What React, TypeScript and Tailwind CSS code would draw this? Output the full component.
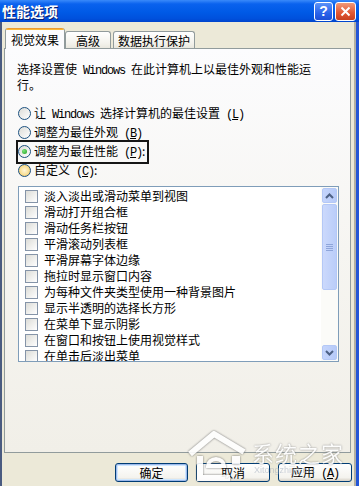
import React from "react";

const items = [
  "淡入淡出或滑动菜单到视图",
  "滑动打开组合框",
  "滑动任务栏按钮",
  "平滑滚动列表框",
  "平滑屏幕字体边缘",
  "拖拉时显示窗口内容",
  "为每种文件夹类型使用一种背景图片",
  "显示半透明的选择长方形",
  "在菜单下显示阴影",
  "在窗口和按钮上使用视觉样式",
  "在单击后淡出菜单",
];

function Latin({ children }: { children: React.ReactNode }) {
  return (
    <span className="font-['Liberation_Mono',monospace] tracking-[-1.2px] whitespace-pre">
      {children}
    </span>
  );
}

function Key({ k }: { k: string }) {
  return (
    <Latin>
      {" "}(<span className="underline">{k}</span>)
    </Latin>
  );
}

function Radio({ kind }: { kind?: "on" | "hover" }) {
  return (
    <span
      className={
        "w-[13px] h-[13px] rounded-full border border-[#1C5180] flex items-center justify-center shrink-0 " +
        (kind === "hover"
          ? "bg-[radial-gradient(circle,#FFF6D8_0%,#F9DF96_55%,#E9B74C_100%)]"
          : "bg-[linear-gradient(135deg,#DCDCD7,#FFFFFF)]")
      }
    >
      {kind === "on" && (
        <span className="w-[5px] h-[5px] rounded-full bg-[radial-gradient(circle_at_35%_35%,#7BE37B,#21A121)]" />
      )}
    </span>
  );
}

function Chevron({ up }: { up?: boolean }) {
  return (
    <svg width="9" height="6" viewBox="0 0 9 6">
      <path
        d={up ? "M1 5 L4.5 1.5 L8 5" : "M1 1 L4.5 4.5 L8 1"}
        fill="none"
        stroke="#4D6185"
        strokeWidth="2"
      />
    </svg>
  );
}

function Btn({ label, def }: { label: React.ReactNode; def?: boolean }) {
  return (
    <div
      className={
        "h-[19px] rounded-[3px] border border-[#003C74] flex items-center justify-center bg-[linear-gradient(#FFFFFF,#F4F3EE_80%,#D6D0C5)] " +
        (def ? "shadow-[inset_0_0_0_1px_#9DB9EB,inset_0_0_0_2px_#CEE7FF]" : "")
      }
    >
      {label}
    </div>
  );
}

export default function App() {
  return (
    <div className="relative w-[359px] h-[486px] overflow-hidden flex flex-col bg-[#ECE9D8] text-[12px] text-black font-['Noto_Sans_CJK_SC','Noto_Sans',sans-serif]">
      {/* title bar */}
      <div className="h-[22px] shrink-0 flex items-center pl-[2px] pr-[3px] bg-[linear-gradient(#3A8AFA_0%,#0A62EE_18%,#005AE6_55%,#0050DC_85%,#0044CC_100%)]">
        <span className="text-white font-bold text-[14px] leading-none [text-shadow:1px_1px_0_#0A1E6E]">
          性能选项
        </span>
        <div className="ml-auto flex gap-[2px]">
          <div className="w-[19px] h-[19px] rounded-[3px] border border-white flex items-center justify-center bg-[linear-gradient(#5C93F8,#2A63EA_60%,#1E4FD6)] text-white font-bold text-[14px] leading-none font-['Liberation_Sans',sans-serif]">
            ?
          </div>
          <div className="w-[21px] h-[19px] rounded-[3px] border border-white flex items-center justify-center bg-[linear-gradient(#F09A7B,#E35A36_55%,#C8401F)]">
            <svg width="11" height="11" viewBox="0 0 11 11">
              <path d="M1.5 1.5 L9.5 9.5 M9.5 1.5 L1.5 9.5" stroke="#fff" strokeWidth="2" />
            </svg>
          </div>
        </div>
      </div>

      <div className="flex-1 flex min-h-0">
        <div className="w-[2px] bg-[#4A5B80]" />
        <div className="flex-1 flex flex-col pt-[6px]">
          {/* tabs */}
          <div className="flex items-end h-[20px] ml-[3px]">
            <div className="relative z-10 w-[60px] h-[21px] -mb-px border-x border-[#919B9C] bg-[#FCFCFE] rounded-t-[3px] flex flex-col">
              <div className="h-[3px] rounded-t-[3px] bg-[linear-gradient(#E68B2C,#FFC83C)]" />
              <div className="flex-1 flex items-center justify-center pt-[1px]">视觉效果</div>
            </div>
            <div className="w-[46px] h-[17px] border-t border-x border-[#919B9C] rounded-t-[3px] bg-[linear-gradient(#FFFFFF,#F3F2EC_70%,#E9E7DE)] flex items-center justify-center pt-[2px]">
              高级
            </div>
            <div className="ml-[2px] w-[82px] h-[17px] border-t border-x border-[#919B9C] rounded-t-[3px] bg-[linear-gradient(#FFFFFF,#F3F2EC_70%,#E9E7DE)] flex items-center justify-center pt-[2px]">
              数据执行保护
            </div>
          </div>

          {/* panel */}
          <div className="ml-[2px] w-[347px] h-[405px] border border-[#919B9C] bg-[linear-gradient(#FCFCFE,#F6F5F1_50%,#F1EFE8)] flex flex-col pt-[13px]">
            <p className="pl-[12px] leading-[13px]">
              选择设置使<Latin> Windows </Latin>在此计算机上以最佳外观和性能运
              <br />
              行。
            </p>

            <div className="mt-[13px] flex flex-col">
              <div className="h-[19px] flex items-center pl-[13px] gap-[3px]">
                <Radio />
                <span>
                  让<Latin> Windows </Latin>选择计算机的最佳设置<Key k="L" />
                </span>
              </div>
              <div className="h-[19px] flex items-center pl-[13px] gap-[3px]">
                <Radio />
                <span>
                  调整为最佳外观<Key k="B" />
                </span>
              </div>
              <div className="h-[19px] flex items-center pl-[13px]">
                <span className="flex items-center gap-[3px] outline-2 outline-[#161616] outline-offset-0 pr-[2px]">
                  <Radio kind="on" />
                  <span>
                    调整为最佳性能<Key k="P" />:
                  </span>
                </span>
              </div>
              <div className="h-[19px] flex items-center pl-[13px] gap-[3px]">
                <Radio kind="hover" />
                <span>
                  自定义<Key k="C" />:
                </span>
              </div>
            </div>

            {/* list box */}
            <div className="mt-[6px] ml-[13px] w-[321px] h-[176px] border border-[#7F9DB9] bg-white flex overflow-hidden">
              <div className="flex-1 flex flex-col pt-[1px] overflow-hidden">
                {items.map((t) => (
                  <div key={t} className="h-[16px] shrink-0 flex items-center pl-[6px] gap-[6px]">
                    <span className="w-[13px] h-[13px] border border-[#8594A8] bg-[linear-gradient(135deg,#DCDCD7,#FFFFFF)] shrink-0" />
                    <span className="leading-none whitespace-nowrap">{t}</span>
                  </div>
                ))}
              </div>
              <div className="w-[17px] flex flex-col p-[1px] bg-[#FBFBF8]">
                <div className="h-[15px] rounded-[2px] border border-[#B4C8F6] bg-[linear-gradient(90deg,#C5D5FC,#B6CAF8)] flex items-center justify-center">
                  <Chevron up />
                </div>
                <div className="mt-[1px] h-[86px] rounded-[2px] border border-[#B4C8F6] bg-[linear-gradient(90deg,#CBD9FC,#BACDF9)] flex flex-col items-center justify-center gap-[1px]">
                  <span className="w-[7px] h-[1px] bg-[#8EA5DA]" />
                  <span className="w-[7px] h-[1px] bg-[#8EA5DA]" />
                  <span className="w-[7px] h-[1px] bg-[#8EA5DA]" />
                  <span className="w-[7px] h-[1px] bg-[#8EA5DA]" />
                </div>
                <div className="flex-1" />
                <div className="h-[15px] rounded-[2px] border border-[#B4C8F6] bg-[linear-gradient(90deg,#C5D5FC,#B6CAF8)] flex items-center justify-center">
                  <Chevron />
                </div>
              </div>
            </div>
          </div>

          {/* buttons */}
          <div className="mt-[10px] flex justify-end gap-[8px] pr-[2px]">
            <div className="w-[73px]">
              <Btn label="确定" def />
            </div>
            <div className="w-[74px]">
              <Btn label="取消" />
            </div>
            <div className="w-[74px]">
              <Btn
                label={
                  <span>
                    应用<Key k="A" />
                  </span>
                }
              />
            </div>
          </div>
        </div>
        <div className="w-[2px] bg-[#B3B0A2]" />
        <div className="w-[3px] bg-[#2456D6]" />
      </div>

      {/* watermark */}
      <div className="absolute left-[186px] top-[428px] w-[64px] h-[54px] opacity-90 [filter:drop-shadow(0_0_1px_#666)]">
        <svg width="64" height="54" viewBox="0 0 64 54">
          <path d="M4 26 L28 6 L58 24" fill="none" stroke="#fff" strokeWidth="6" strokeLinejoin="round" />
          <path d="M14 28 L14 50 L44 50" fill="none" stroke="#fff" strokeWidth="6" />
          <path d="M22 38 A8 7 0 1 1 38 38 L22 38 Z" fill="none" stroke="#fff" strokeWidth="4" />
          <rect x="46" y="28" width="8" height="8" fill="#fff" />
        </svg>
      </div>
      <div className="absolute left-[252px] top-[441px] text-white text-[22px] leading-none tracking-[1px] opacity-90 [text-shadow:0_0_2px_#777]">
        系统之家
      </div>
      <div className="absolute left-[254px] top-[466px] text-[#9AA6B8] text-[9px] leading-none opacity-50 font-['Liberation_Sans',sans-serif]">
        Xitongzhijia.net
      </div>
    </div>
  );
}
